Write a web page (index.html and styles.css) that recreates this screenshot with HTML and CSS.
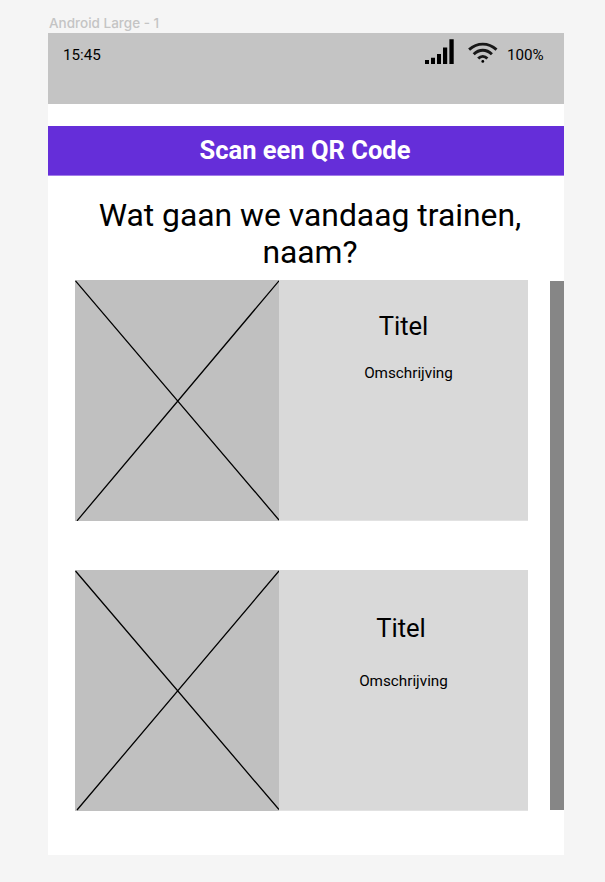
FILE: index.html
```html
<!DOCTYPE html>
<html lang="nl">
<head>
<meta charset="utf-8">
<title>Trainen</title>
<link rel="stylesheet" href="styles.css">
</head>
<body>
<div class="frame-label">Android Large - 1</div>
<main class="frame">
  <header class="status">
    <span class="time">15:45</span>
    <svg class="signal" width="30" height="26" viewBox="0 0 30 26"><path d="M0 21h4v4H0zM6 18.7h4V25H6zM12 15h4v10h-4zM18 8.5h4.2V25H18zM24.4 .2h4.3V25h-4.3z"/></svg>
    <svg class="wifi" width="30" height="22" viewBox="0 0 30 22"><g fill="none" stroke="#181818" stroke-width="2.9"><path d="M1.1 7.6Q7.3 2.1 14.8 2.1T28.5 7.6"/><path d="M5.7 12.2Q9.8 8.2 14.8 8.2T23.9 12.2"/><path d="M10.2 16.6Q12.3 14.4 14.8 14.4T19.4 16.6"/></g><circle cx="14.8" cy="19.4" r="1.4"/></svg>
    <span class="battery">100%</span>
  </header>
  <div class="scan">Scan een QR Code</div>
  <h1 class="heading">Wat gaan we vandaag trainen,<br>naam?</h1>
  <div class="content">
    <div class="cards">
      <article class="card">
        <svg class="image" width="204" height="241" viewBox="0 0 204 241"><path d="M.5 .8 204 240M2 240.8 204 .8"/></svg>
        <div class="text"><h2>Titel</h2><p>Omschrijving</p></div>
      </article>
      <article class="card second">
        <svg class="image" width="204" height="241" viewBox="0 0 204 241"><path d="M.5 1 204 239.6M2 240 204 1"/></svg>
        <div class="text"><h2>Titel</h2><p>Omschrijving</p></div>
      </article>
    </div>
    <div class="scrollbar"></div>
  </div>
</main>
</body>
</html>
```
FILE: styles.css
```css
* { box-sizing: border-box; }
body {
  margin: 0;
  padding: 14px 0 0 48px;
  height: 882px;
  background: #f5f5f5;
  color: #000;
  font-family: Roboto, sans-serif;
  overflow: hidden;
}
.frame-label {
  height: 19px;
  padding-left: 1px;
  font: 500 13.5px/18px Inter, sans-serif;
  color: #c4c4c4;
}
.frame {
  width: 516px;
  height: 822px;
  background: #fff;
}
.status {
  display: flex;
  height: 71px;
  padding: 0 0 0 15px;
  background: #c4c4c4;
  font-size: 15.2px;
  line-height: 18px;
}
.time { margin-top: 13px; }
.signal { margin: 6px 0 0 auto; }
.wifi { margin: 9px 0 0 13px; }
.battery { width: 57px; margin: 13px 0 0 9px; }
.scan {
  height: 50px;
  margin-top: 22px;
  padding-right: 2px;
  border-bottom: 1px solid #a27ce8;
  background: #652ed9;
  color: #fff;
  font-size: 25.5px;
  font-weight: 700;
  line-height: 49px;
  text-align: center;
}
.heading {
  height: 83px;
  margin: 21px 0 0;
  padding-left: 8px;
  font-size: 31.85px;
  font-weight: 400;
  line-height: 37px;
  text-align: center;
}
.content {
  display: flex;
  justify-content: space-between;
  padding-left: 27px;
}
.cards {
  display: flex;
  flex-direction: column;
  gap: 49px;
  width: 453px;
}
.card {
  display: flex;
  height: 241px;
  border-bottom: 1px solid #e2e2e2;
  background: #d9d9d9;
}
.image {
  flex: none;
  background: #c0c0c0;
}
.image path {
  stroke: #000;
  stroke-width: 1.3;
}
.text {
  flex: 1;
  padding: 31px 0 0;
  text-align: center;
}
.text h2 {
  margin: 0;
  font-size: 25.6px;
  font-weight: 400;
  line-height: 30px;
}
.text p {
  margin: 23px 0 0;
  padding-left: 10px;
  font-size: 15.25px;
  line-height: 18px;
}
.second .text {
  padding: 43px 5px 0 0;
}
.second .text p {
  margin-top: 29px;
  padding-left: 5px;
}
.scrollbar {
  width: 14px;
  height: 529px;
  margin-top: 1px;
  background: #868686;
}
```
